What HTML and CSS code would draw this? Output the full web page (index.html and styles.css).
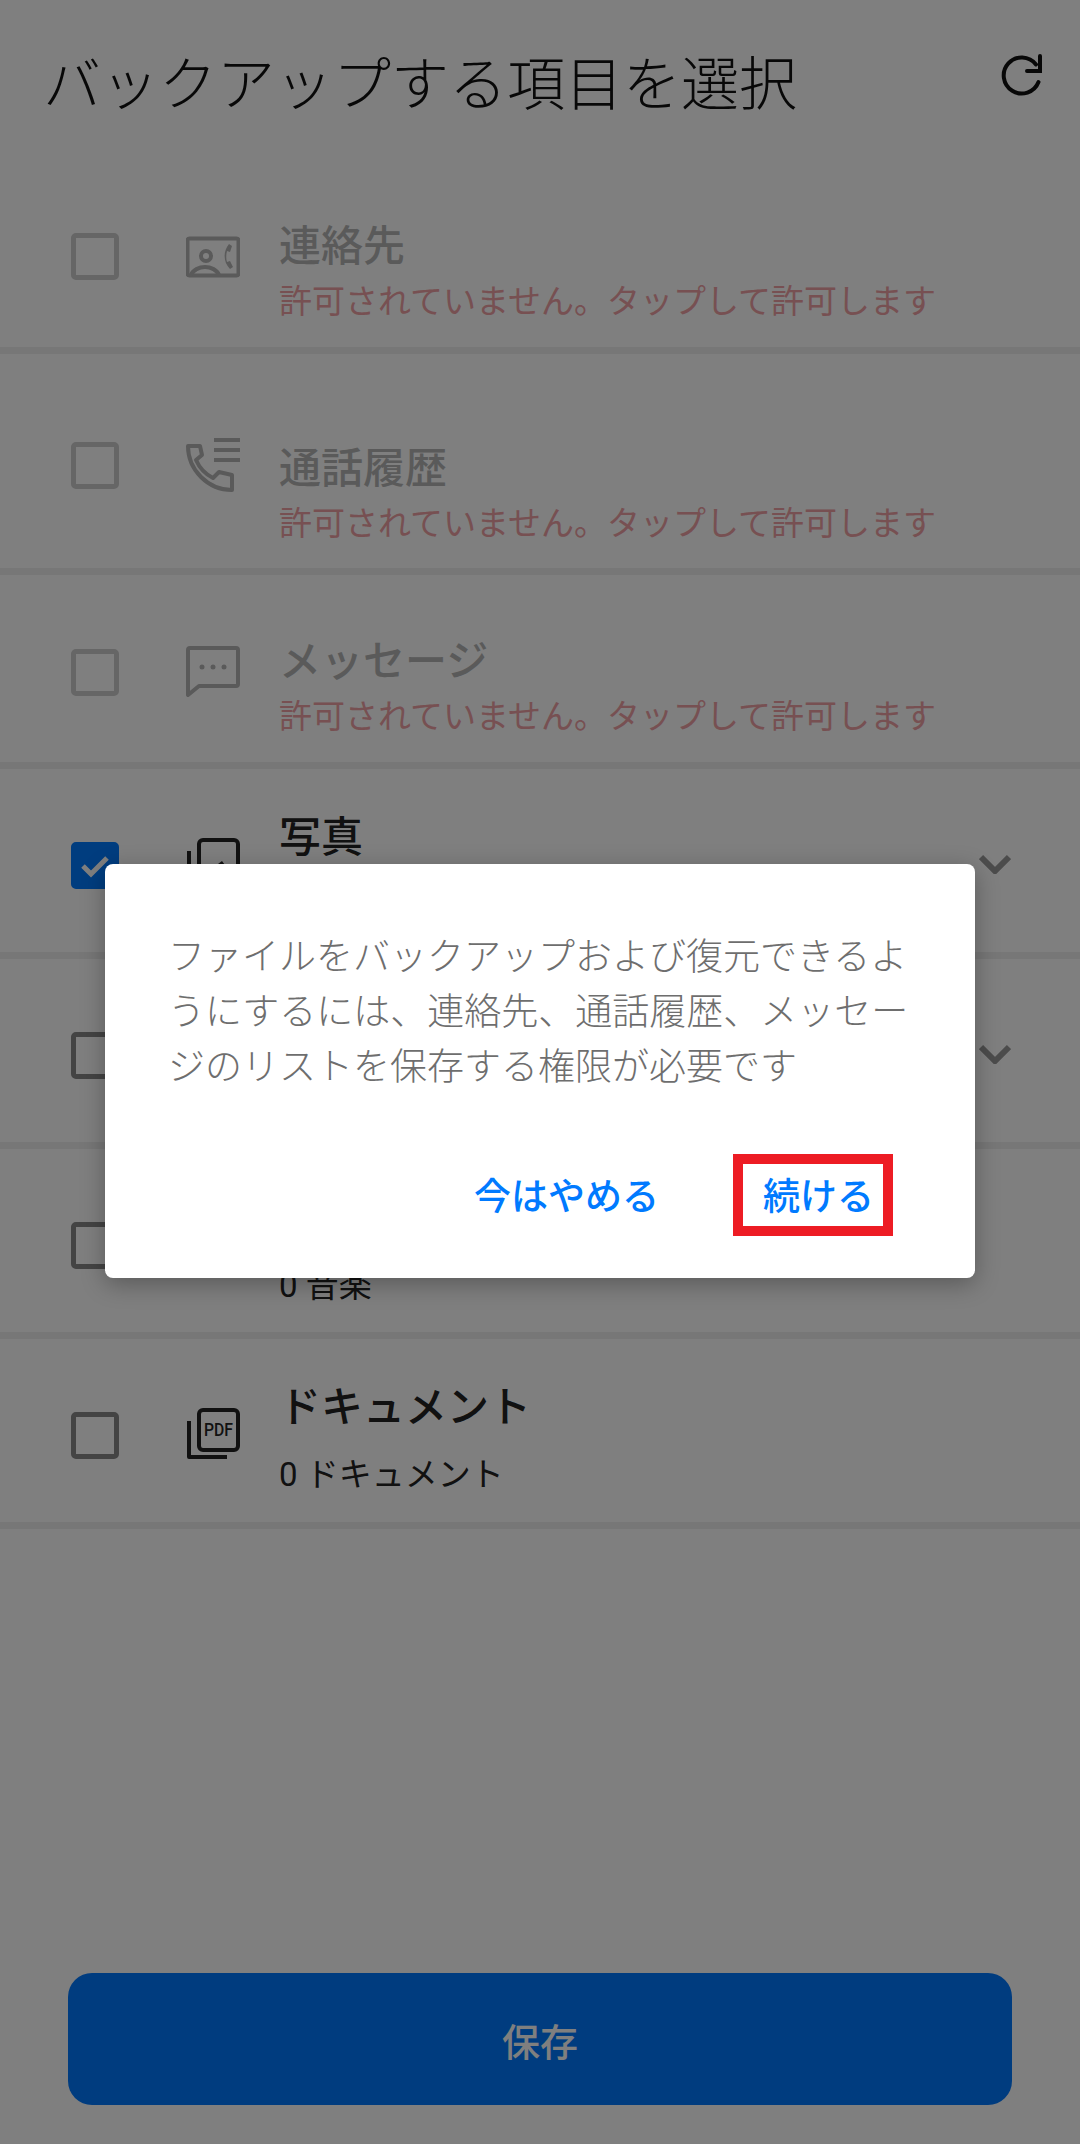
FILE: index.html
```html
<!DOCTYPE html>
<html lang="ja">
<head>
    <meta charset="UTF-8">
    <meta name="viewport" content="width=device-width, initial-scale=1.0">
    <title>バックアップする項目を選択</title>
    <link rel="stylesheet" href="styles.css">
</head>
<body>
    <div class="page">
        <header class="top">
            <h1>バックアップする項目を選択</h1>
            <svg class="refresh" viewBox="0 0 44 44">
                <path d="M37.500 28A18 18 0 1 1 35 10.500"/>
                <path d="M39 2v15H26"/>
            </svg>
        </header>

        <main class="list">
            <section class="row row-locked row-contacts">
                <span class="box"></span>
                <svg class="icon" viewBox="0 0 54 54">
                    <rect x="1.500" y="9.500" width="51" height="37" rx="2"/>
                    <circle cx="20" cy="27" r="5"/>
                    <path d="M5 46c2-5 8-8 14-8s12 3 14 8"/>
                    <path class="solid" d="M43 15l3 2-2 6-3-1c-1 4-1 8 0 11l3-1 3 6-3 2c-7-7-7-18-1-25z"/>
                </svg>
                <div class="text">
                    <div class="name">連絡先</div>
                    <div class="sub">許可されていません。タップして許可します</div>
                </div>
            </section>

            <section class="row row-locked row-calls">
                <span class="box"></span>
                <svg class="icon" viewBox="0 0 54 54">
                    <path d="M2 8h12l2 9-6 5c4 9 9 14 17 18l6-6 13 3v15c-24 0-44-20-44-44z"/>
                    <path d="M28 2h26M28 12h26M28 22h26"/>
                </svg>
                <div class="text">
                    <div class="name">通話履歴</div>
                    <div class="sub">許可されていません。タップして許可します</div>
                </div>
            </section>

            <section class="row row-locked row-messages">
                <span class="box"></span>
                <svg class="icon" viewBox="0 0 54 54">
                    <path d="M4 3h46a2 2 0 0 1 2 2v34a2 2 0 0 1-2 2H13l-11 9V5a2 2 0 0 1 2-2z"/>
                    <circle class="solid" cx="16" cy="22" r="2.500"/>
                    <circle class="solid" cx="27" cy="22" r="2.500"/>
                    <circle class="solid" cx="38" cy="22" r="2.500"/>
                </svg>
                <div class="text">
                    <div class="name">メッセージ</div>
                    <div class="sub">許可されていません。タップして許可します</div>
                </div>
            </section>

            <section class="row row-media">
                <span class="box box-on">
                    <svg class="check" viewBox="0 0 30 24"><path d="M3 12l8 8L27 4"/></svg>
                </span>
                <svg class="icon" viewBox="0 0 54 54">
                    <rect x="13" y="2" width="39" height="40" rx="4"/>
                    <path d="M3 13v36h38"/>
                    <path class="solid" d="M16 38l9-12 3 3 8-6 11 15z"/>
                </svg>
                <div class="text">
                    <div class="name">写真</div>
                </div>
                <svg class="chevron" viewBox="0 0 32 20"><path d="M2 3l14 14L30 3"/></svg>
            </section>

            <section class="row row-media">
                <span class="box"></span>
                <svg class="chevron" viewBox="0 0 32 20"><path d="M2 3l14 14L30 3"/></svg>
            </section>

            <section class="row row-media">
                <span class="box"></span>
                <div class="text text-under">
                    <div class="sub">0 音楽</div>
                </div>
            </section>

            <section class="row row-media">
                <span class="box"></span>
                <svg class="icon" viewBox="0 0 54 54">
                    <rect x="13" y="2" width="39" height="40" rx="4"/>
                    <path d="M3 13v36h38"/>
                    <text class="pdf" x="32.500" y="28" text-anchor="middle" textLength="29" lengthAdjust="spacingAndGlyphs">PDF</text>
                </svg>
                <div class="text">
                    <div class="name">ドキュメント</div>
                    <div class="sub">0 ドキュメント</div>
                </div>
            </section>
        </main>

        <footer class="bottom">
            <button class="save">保存</button>
        </footer>
    </div>

    <div class="scrim"></div>

    <div class="dialog">
        <p>ファイルをバックアップおよび復元できるよ<br>うにするには、連絡先、通話履歴、メッセー<br>ジのリストを保存する権限が必要です</p>
        <div class="actions">
            <button class="action">今はやめる</button>
            <button class="action action-marked">続ける</button>
        </div>
    </div>
</body>
</html>
```

FILE: styles.css
```css
* {
    box-sizing: border-box;
}
body {
    margin: 0;
    background-color: #fff;
    color: #222;
    font-family: Roboto, 'Noto Sans CJK JP', sans-serif;
}
.page {
    display: flex;
    flex-direction: column;
    height: 2144px;
}
.top {
    display: flex;
    justify-content: space-between;
    height: 170px;
    padding: 47px 35px 0 43px;
}
.top h1 {
    margin: 0;
    font-size: 58px;
    line-height: 76px;
    font-weight: 300;
    color: #111;
}
.refresh {
    width: 44px;
    height: 44px;
    margin-top: 7px;
    fill: none;
    stroke: #111;
    stroke-width: 4;
    stroke-linecap: round;
}

.row {
    display: flex;
    align-items: flex-start;
    position: relative;
    padding-left: 71px;
    border-bottom: 7px solid #eee;
}
.row-contacts {
    height: 184px;
    padding-top: 63px;
}
.row-calls {
    height: 221px;
    padding-top: 88px;
}
.row-messages {
    height: 194px;
    padding-top: 74px;
}
.row-media {
    height: 190px;
    padding-top: 73px;
}

.box {
    display: flex;
    align-items: center;
    justify-content: center;
    flex-shrink: 0;
    width: 48px;
    height: 47px;
    border: 5px solid #888;
    border-radius: 5px;
}
.box-on {
    background-color: #007aff;
    border-color: #007aff;
}
.check {
    width: 30px;
    height: 24px;
    fill: none;
    stroke: #fff;
    stroke-width: 5;
}
.icon {
    flex-shrink: 0;
    width: 54px;
    height: 54px;
    margin-left: 67px;
    margin-top: -4px;
    fill: none;
    stroke: #222;
    stroke-width: 4;
    stroke-linejoin: round;
}
.icon .solid {
    fill: #222;
    stroke: none;
}
.icon .pdf {
    fill: #222;
    stroke: none;
    font-size: 18px;
    font-weight: 500;
}

.text {
    margin-left: 39px;
    margin-top: -32px;
}
.text-under {
    margin-left: 160px;
    margin-top: 25px;
}
.name {
    font-size: 42px;
    line-height: 56px;
    font-weight: 500;
}
.sub {
    margin-top: 17px;
    font-size: 33px;
    line-height: 44px;
}
.chevron {
    position: absolute;
    right: 69px;
    top: 85px;
    width: 32px;
    height: 20px;
    fill: none;
    stroke: #999;
    stroke-width: 6;
}

.row-locked .box {
    border-color: #ccc;
}
.row-locked .icon {
    stroke: #b4b4b4;
}
.row-locked .icon .solid {
    fill: #b4b4b4;
}
.row-locked .text {
    margin-top: -14px;
}
.row-locked .name {
    color: #b4b4b4;
}
.row-locked .sub {
    margin-top: 5px;
    color: #eea0a4;
}
.row-calls .text {
    margin-top: -1px;
}
.row-messages .text {
    margin-top: -15px;
}

.bottom {
    display: flex;
    justify-content: center;
    margin-top: auto;
    padding-bottom: 39px;
}
.save {
    width: 944px;
    height: 132px;
    border: 0;
    border-radius: 24px;
    background-color: #0078fe;
    color: #fff;
    font-family: inherit;
    font-size: 38px;
    font-weight: 500;
}

.scrim {
    position: absolute;
    top: 0;
    left: 0;
    width: 1080px;
    height: 2144px;
    background-color: rgba(0, 0, 0, 0.5);
}
.dialog {
    position: absolute;
    top: 864px;
    left: 105px;
    width: 870px;
    height: 414px;
    padding: 66px 63px 0;
    background-color: #fff;
    border-radius: 8px;
    box-shadow: 0px 6px 24px rgba(0, 0, 0, 0.3);
}
.dialog p {
    margin: 0;
    font-size: 37px;
    line-height: 55px;
    font-weight: 300;
    color: #6e6e6e;
    white-space: nowrap;
}
.actions {
    display: flex;
    justify-content: flex-end;
    align-items: center;
    gap: 74px;
    margin-top: 59px;
    margin-right: 19px;
}
.action {
    height: 82px;
    padding: 0 0 3px;
    border: 0;
    background: none;
    color: #007aff;
    font-family: inherit;
    font-size: 37px;
    font-weight: 500;
}
.action-marked {
    width: 160px;
    padding-left: 20px;
    border: 10px solid #ed1c24;
    text-align: left;
}
```
